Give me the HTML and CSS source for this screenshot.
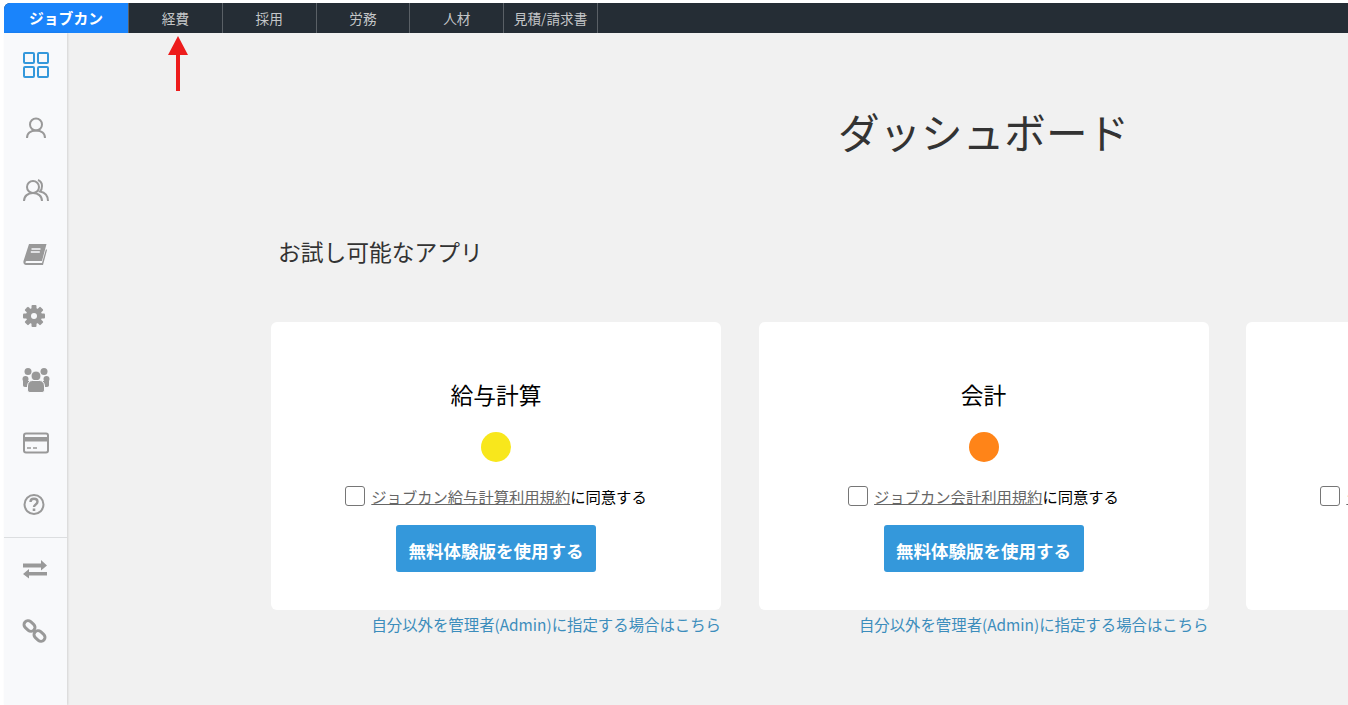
FILE: index.html
```html
<!DOCTYPE html>
<html lang="ja">
<head>
    <meta charset="UTF-8">
    <meta name="viewport" content="width=device-width, initial-scale=1.0">
    <title>ダッシュボード - ジョブカン</title>
    <link rel="stylesheet" href="styles.css">
</head>
<body>
    <nav class="topbar">
        <a class="brand" href="#">ジョブカン</a>
        <a class="topbar-item" href="#">経費</a>
        <a class="topbar-item" href="#">採用</a>
        <a class="topbar-item" href="#">労務</a>
        <a class="topbar-item" href="#">人材</a>
        <a class="topbar-item" href="#">見積/請求書</a>
    </nav>

    <!-- annotation pointing at the 経費 tab -->
    <svg class="red-arrow" width="20" height="56" viewBox="0 0 20 56">
        <polygon points="10,0 20,19 12,19 12,55 8,55 8,19 0,19" fill="#ed1c1c"/>
    </svg>

    <div class="layout">
        <aside class="sidebar">
            <a class="side-item" href="#">
                <svg width="28" height="28" viewBox="0 0 28 28" fill="none" stroke="#3498db" stroke-width="2">
                    <rect x="2" y="2" width="10" height="10" rx="1"/>
                    <rect x="16" y="2" width="10" height="10" rx="1"/>
                    <rect x="2" y="16" width="10" height="10" rx="1"/>
                    <rect x="16" y="16" width="10" height="10" rx="1"/>
                </svg>
            </a>
            <a class="side-item" href="#">
                <svg width="28" height="28" viewBox="0 0 28 28" fill="none" stroke="#999" stroke-width="2">
                    <circle cx="14" cy="10.500" r="6"/>
                    <path d="M5 24c0-5 4-7.500 9-7.500s9 2.500 9 7.500"/>
                </svg>
            </a>
            <a class="side-item" href="#">
                <svg width="28" height="28" viewBox="0 0 28 28" fill="none" stroke="#999" stroke-width="2">
                    <circle cx="11" cy="10" r="6"/>
                    <path d="M2 24c0-5 4-8 9-8s9 3 9 8"/>
                    <path d="M16 3c2.500 1 4 3.500 4 6 0 2-.5 4-2 5.500 5 1 8 4.500 8 9.500"/>
                </svg>
            </a>
            <a class="side-item" href="#">
                <svg width="28" height="28" viewBox="0 0 28 28">
                    <path d="M7 4h17.500l-4.500 17h-15c-1.500 0-2 1.500-1 2h16l4-14 1 1-4 15h-17c-2 0-3-2-2.500-4z" fill="#999"/>
                    <path d="M9.500 9h9M8.800 12h9" stroke="#f8f9fb" stroke-width="1.500"/>
                </svg>
            </a>
            <a class="side-item" href="#">
                <svg width="28" height="28" viewBox="0 0 28 28">
                    <g fill="#999">
                        <rect x="9.500" y="2" width="5" height="22" rx="1"/>
                        <rect x="9.500" y="2" width="5" height="22" rx="1" transform="rotate(45 12 13)"/>
                        <rect x="9.500" y="2" width="5" height="22" rx="1" transform="rotate(90 12 13)"/>
                        <rect x="9.500" y="2" width="5" height="22" rx="1" transform="rotate(135 12 13)"/>
                    </g>
                    <circle cx="12" cy="13" r="5.500" fill="none" stroke="#999" stroke-width="5"/>
                    <circle cx="12" cy="13" r="3" fill="#f8f9fb"/>
                </svg>
            </a>
            <a class="side-item" href="#">
                <svg width="28" height="28" viewBox="0 0 28 28" fill="#999">
                    <circle cx="6" cy="5.500" r="3.500"/>
                    <circle cx="22" cy="5.500" r="3.500"/>
                    <circle cx="3.500" cy="13" r="3"/>
                    <circle cx="24.500" cy="13" r="3"/>
                    <path d="M1 15h6v6H3c-1.500 0-2-1-2-2zM27 15h-6v6h4c1.500 0 2-1 2-2z"/>
                    <circle cx="14" cy="10" r="5" stroke="#f8f9fb"/>
                    <path d="M5.500 20c0-3.500 2.500-5.500 5-5.500h7c2.500 0 5 2 5 5.500v4c0 1.500-1 2.500-2.500 2.500h-12c-1.500 0-2.500-1-2.500-2.500z" stroke="#f8f9fb"/>
                </svg>
            </a>
            <a class="side-item" href="#">
                <svg width="28" height="28" viewBox="0 0 28 28">
                    <rect x="2" y="4.500" width="24" height="19" rx="2" fill="none" stroke="#999" stroke-width="2"/>
                    <rect x="2" y="8" width="24" height="4.500" fill="#999"/>
                    <path d="M5 19h4M11 19h4" stroke="#999" stroke-width="1.500"/>
                </svg>
            </a>
            <a class="side-item" href="#">
                <svg width="28" height="28" viewBox="0 0 28 28" fill="none" stroke="#999">
                    <circle cx="12" cy="12.500" r="9.500" stroke-width="2"/>
                    <path d="M8.500 10c0-2 1.500-3.200 3.500-3.200s3.500 1.200 3.500 3c0 2.800-3.500 2.500-3.500 5.200" stroke-width="2.400"/>
                    <path d="M12 16.500v2.500" stroke-width="2.600"/>
                </svg>
            </a>
            <div class="side-divider"></div>
            <a class="side-item" href="#">
                <svg width="28" height="28" viewBox="0 0 28 28" fill="#999">
                    <path d="M1 8.500h18V5l6 5.500-6 5v-3H1zM25 17H7v-3l-6 5 6 4.500v-3h18z"/>
                </svg>
            </a>
            <a class="side-item" href="#">
                <svg width="28" height="28" viewBox="0 0 28 28" fill="none" stroke="#999" stroke-width="3">
                    <rect x="1.500" y="4" width="12" height="8" rx="4" transform="rotate(42 7.500 8)"/>
                    <rect x="11.500" y="14" width="12" height="8" rx="4" transform="rotate(42 17.500 18)"/>
                </svg>
            </a>
        </aside>

        <main class="content">
            <div class="content-inner">
                <h1 class="page-title">ダッシュボード</h1>
                <h2 class="section-title">お試し可能なアプリ</h2>

                <div class="app-grid">
                    <div class="app">
                        <div class="card">
                            <h3 class="card-title">給与計算</h3>
                            <span class="dot dot-yellow"></span>
                            <label class="agree">
                                <input type="checkbox" class="agree-box">
                                <span><a href="#">ジョブカン給与計算利用規約</a>に同意する</span>
                            </label>
                            <button class="try-btn">無料体験版を使用する</button>
                        </div>
                        <a class="admin-link" href="#">自分以外を管理者(Admin)に指定する場合はこちら</a>
                    </div>

                    <div class="app">
                        <div class="card">
                            <h3 class="card-title">会計</h3>
                            <span class="dot dot-orange"></span>
                            <label class="agree">
                                <input type="checkbox" class="agree-box">
                                <span><a href="#">ジョブカン会計利用規約</a>に同意する</span>
                            </label>
                            <button class="try-btn">無料体験版を使用する</button>
                        </div>
                        <a class="admin-link" href="#">自分以外を管理者(Admin)に指定する場合はこちら</a>
                    </div>

                    <div class="app">
                        <div class="card">
                            <h3 class="card-title">勤怠管理</h3>
                            <span class="dot dot-orange"></span>
                            <label class="agree">
                                <input type="checkbox" class="agree-box">
                                <span><a href="#">ジョブカン勤怠管理利用規約</a>に同意する</span>
                            </label>
                            <button class="try-btn">無料体験版を使用する</button>
                        </div>
                        <a class="admin-link" href="#">自分以外を管理者(Admin)に指定する場合はこちら</a>
                    </div>
                </div>
            </div>
        </main>
    </div>
</body>
</html>
```

FILE: styles.css
```css
html, body {
    height: 100%;
    overflow: hidden;
}
body {
    margin: 0;
    padding: 3px 0 0 4px;
    box-sizing: border-box;
    display: flex;
    flex-direction: column;
    position: relative;
    background-color: #fff;
    font-family: "Noto Sans CJK JP", "Noto Sans", sans-serif;
    color: #333;
}
a {
    text-decoration: none;
}
.topbar {
    display: flex;
    flex: none;
    height: 30px;
    background-color: #252d35;
    border-top-left-radius: 6px;
}
.brand {
    width: 124px;
    line-height: 30px;
    text-align: center;
    font-size: 14.800px;
    font-weight: 700;
    color: #fff;
    background-color: #1a84fb;
    border-top-left-radius: 6px;
}
.topbar-item {
    width: 93.800px;
    box-sizing: border-box;
    border-left: 1px solid #5a6066;
    line-height: 30px;
    text-align: center;
    font-size: 13.650px;
    color: #c4c6c8;
}
.topbar-item:last-child {
    width: 94.800px;
    border-right: 1px solid #5a6066;
}
.red-arrow {
    position: absolute;
    left: 168px;
    top: 36px;
}
.layout {
    display: flex;
    flex: 1;
    min-height: 0;
}
.sidebar {
    flex: none;
    width: 63px;
    background-color: #f8f9fb;
    box-shadow: 1px 0 2px rgba(0,0,0,0.12);
    position: relative;
}
.side-item {
    display: flex;
    align-items: center;
    justify-content: center;
    height: 63px;
}
.side-divider {
    height: 1px;
    margin-bottom: -1px;
    background-color: #dcdee0;
}
.content {
    flex: 1;
    min-width: 0;
    overflow: hidden;
    background-color: #f1f1f1;
}
.content-inner {
    width: 1425px;
    margin-left: 204px;
}
.page-title {
    margin: 0;
    padding-top: 66px;
    text-align: center;
    font-size: 41.600px;
    font-weight: 400;
    line-height: 64px;
}
.section-title {
    margin: 73px 0 0 7px;
    font-size: 22.750px;
    font-weight: 400;
    line-height: 32px;
}
.app-grid {
    display: grid;
    grid-template-columns: repeat(3, 450px);
    column-gap: 37.500px;
    margin-top: 54px;
}
.card {
    display: flex;
    flex-direction: column;
    align-items: center;
    height: 288px;
    box-sizing: border-box;
    padding-top: 55px;
    background-color: #fff;
    border-radius: 6px;
}
.card-title {
    margin: 0;
    font-size: 22.750px;
    font-weight: 400;
    line-height: 36px;
    color: #000;
}
.dot {
    width: 30px;
    height: 30px;
    margin-top: 19px;
    border-radius: 50%;
}
.dot-yellow {
    background-color: #f8e71c;
}
.dot-orange {
    background-color: #ff8418;
}
.agree {
    display: flex;
    align-items: center;
    margin-top: 24px;
    font-size: 15.300px;
    line-height: 20px;
    color: #000;
}
.agree a {
    color: #666;
    text-decoration: underline;
}
.agree-box {
    appearance: none;
    width: 20px;
    height: 20px;
    margin: 0 6px 0 0;
    border: 1px solid #767676;
    border-radius: 3px;
    background-color: #fff;
}
.try-btn {
    width: 200px;
    height: 47px;
    margin-top: 19px;
    padding: 3px 0 0;
    border: none;
    border-radius: 3px;
    background-color: #3498db;
    color: #fff;
    font-family: inherit;
    font-size: 17.500px;
    font-weight: 700;
}
.admin-link {
    display: block;
    margin-top: 4px;
    text-align: right;
    font-size: 15.400px;
    line-height: 20px;
    color: #3c8dbc;
}
```
